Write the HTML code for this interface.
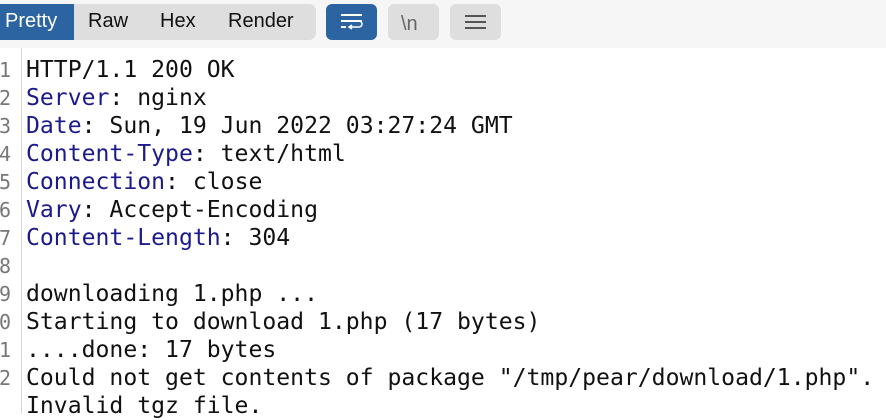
<!DOCTYPE html>
<html><head><style>
html,body{margin:0;padding:0;width:886px;height:414px;overflow:hidden;background:#fff}
.hdr{position:absolute;left:0;top:0;width:886px;height:48px;background:#f6f6f6}
.tabs{position:absolute;left:0;top:4px;width:316px;height:36px;background:#dedede;border-radius:0 7px 7px 0;font-family:"Liberation Sans",sans-serif;font-size:20px;color:#111}
.tabs span{position:absolute;top:6px}
.act{position:absolute;left:0;top:0;width:74px;height:36px;background:#2b64a0}
.btn{position:absolute;top:4px;width:51px;height:36px;border-radius:6px;background:#dedede}
.gut{position:absolute;left:21px;top:48px;width:1px;height:366px;background:#d8d8d8}
.row{position:absolute;left:0;height:28px;font-family:"DejaVu Sans Mono","Liberation Mono",monospace;font-size:23.1px;line-height:28px;white-space:pre;color:#111}
.ln{position:absolute;left:-1px;width:14px;color:#777;font-size:20px}
.t{position:absolute;left:26px}
.k{color:#1a1a8c}
</style></head><body>
<div class="hdr"></div>
<div class="tabs"><div class="act"></div>
<span style="left:5px;color:#fff">Pretty</span><span style="left:88px">Raw</span><span style="left:160px">Hex</span><span style="left:228px">Render</span></div>
<div class="btn" style="left:326px;background:#2b64a0">
<svg width="51" height="36"><g stroke="#fff" stroke-width="2" fill="none"><path d="M15 11h21M15 17h21M15 23h5"/><path d="M23 23h10a3 3 0 0 0 0-6" stroke-width="1.5"/><path d="M26 21l-3 2 3 2" stroke-width="1.5"/></g></svg></div>
<div class="btn" style="left:388px"><svg width="51" height="36"><text x="13" y="26" font-family="Liberation Sans,sans-serif" font-size="20" fill="#666">\n</text></svg></div>
<div class="btn" style="left:450px"><svg width="51" height="36"><g stroke="#555" stroke-width="2"><path d="M15 12h21M15 18h21M15 24h21"/></g></svg></div>
<div class="gut"></div>
<div class="row" style="top:56px"><span class="ln">1</span><span class="t">HTTP/1.1 200 OK</span></div>
<div class="row" style="top:84px"><span class="ln">2</span><span class="t"><span class="k">Server</span>: nginx</span></div>
<div class="row" style="top:112px"><span class="ln">3</span><span class="t"><span class="k">Date</span>: Sun, 19 Jun 2022 03:27:24 GMT</span></div>
<div class="row" style="top:140px"><span class="ln">4</span><span class="t"><span class="k">Content-Type</span>: text/html</span></div>
<div class="row" style="top:168px"><span class="ln">5</span><span class="t"><span class="k">Connection</span>: close</span></div>
<div class="row" style="top:196px"><span class="ln">6</span><span class="t"><span class="k">Vary</span>: Accept-Encoding</span></div>
<div class="row" style="top:224px"><span class="ln">7</span><span class="t"><span class="k">Content-Length</span>: 304</span></div>
<div class="row" style="top:252px"><span class="ln">8</span></div>
<div class="row" style="top:280px"><span class="ln">9</span><span class="t">downloading 1.php ...</span></div>
<div class="row" style="top:308px"><span class="ln">0</span><span class="t">Starting to download 1.php (17 bytes)</span></div>
<div class="row" style="top:336px"><span class="ln">1</span><span class="t">....done: 17 bytes</span></div>
<div class="row" style="top:364px"><span class="ln">2</span><span class="t">Could not get contents of package "/tmp/pear/download/1.php".</span></div>
<div class="row" style="top:392px"><span class="t">Invalid tgz file.</span></div>
</body></html>
